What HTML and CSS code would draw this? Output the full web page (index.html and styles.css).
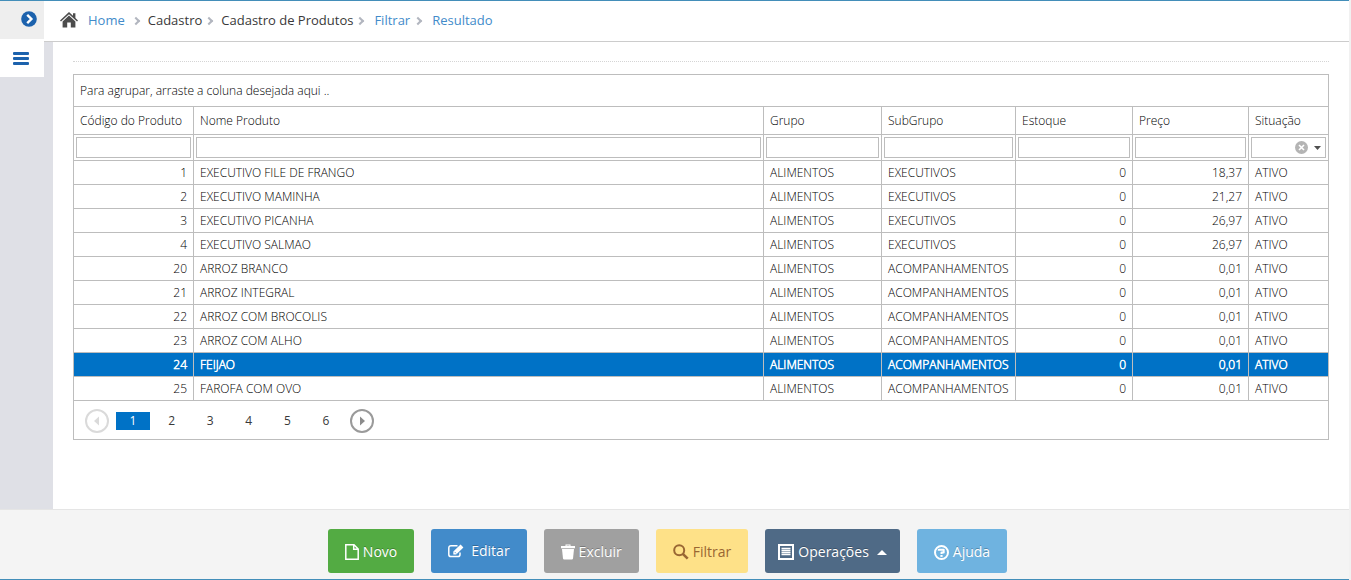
FILE: index.html
```html
<!DOCTYPE html>
<html lang="pt-BR">
<head>
  <meta charset="UTF-8">
  <title>Cadastro de Produtos</title>
  <link rel="stylesheet" href="styles.css">
</head>
<body>
  <div class="page">
    <div class="layout">

      <aside class="sidebar">
        <button class="side-btn side-toggle" aria-label="Expandir menu">
          <svg width="16" height="16" viewBox="0 0 16 16"><circle cx="8" cy="8" r="7.8" fill="#1c62ad"/><path d="M6.2 3.8 10.4 8l-4.2 4.2" fill="none" stroke="#fff" stroke-width="2.4"/></svg>
        </button>
        <button class="side-btn side-menu" aria-label="Menu">
          <svg width="16" height="14" viewBox="0 0 16 14" fill="#1c62ad"><rect y="0" width="16" height="3" rx="1"/><rect y="5" width="16" height="3" rx="1"/><rect y="10" width="16" height="3" rx="1"/></svg>
        </button>
      </aside>

      <div class="main">
        <nav class="topbar">
          <svg class="home-icon" width="18" height="16" viewBox="0 0 18 16" fill="#4c4c4c"><path d="M9 0 13 3.8V1.2h2.4V6L18 8.5l-1 1L9 2.2 1 9.5l-1-1z"/><path d="M9 3.6 15.4 9.400V15.500H10.800V10.500H7.200V15.500H2.600V9.400z"/></svg>
          <ul class="breadcrumb">
            <li><a href="#">Home</a></li>
            <li>Cadastro</li>
            <li>Cadastro de Produtos</li>
            <li><a href="#">Filtrar</a></li>
            <li><a href="#">Resultado</a></li>
          </ul>
        </nav>

        <div class="content">
          <hr class="divider">

          <div class="grid">
            <div class="group-panel">Para agrupar, arraste a coluna desejada aqui ..</div>
            <table class="grid-table">
              <colgroup>
                <col class="col-codigo">
                <col>
                <col class="col-grupo">
                <col class="col-subgrupo">
                <col class="col-estoque">
                <col class="col-preco">
                <col class="col-situacao">
              </colgroup>
              <thead>
                <tr>
                  <th>Código do Produto</th>
                  <th>Nome Produto</th>
                  <th>Grupo</th>
                  <th>SubGrupo</th>
                  <th>Estoque</th>
                  <th>Preço</th>
                  <th>Situação</th>
                </tr>
                <tr class="filter-row">
                  <td><input type="text" aria-label="Código do Produto"></td>
                  <td><input type="text" aria-label="Nome Produto"></td>
                  <td><input type="text" aria-label="Grupo"></td>
                  <td><input type="text" aria-label="SubGrupo"></td>
                  <td><input type="text" aria-label="Estoque"></td>
                  <td><input type="text" aria-label="Preço"></td>
                  <td>
                    <div class="combo">
                      <select aria-label="Situação"><option></option></select>
                      <button class="combo-clear" aria-label="Limpar">
                        <svg width="13" height="13" viewBox="0 0 13 13"><circle cx="6.500" cy="6.500" r="6.500" fill="#b4b4b4"/><path d="M4 4l5 5M9 4l-5 5" stroke="#fff" stroke-width="1.600"/></svg>
                      </button>
                      <svg class="combo-arrow" width="7" height="4" viewBox="0 0 7 4"><path d="M0 0h7L3.500 4z" fill="#4f4f4f"/></svg>
                    </div>
                  </td>
                </tr>
              </thead>
              <tbody>
                <tr><td class="num">1</td><td>EXECUTIVO FILE DE FRANGO</td><td>ALIMENTOS</td><td>EXECUTIVOS</td><td class="num">0</td><td class="num">18,37</td><td>ATIVO</td></tr>
                <tr><td class="num">2</td><td>EXECUTIVO MAMINHA</td><td>ALIMENTOS</td><td>EXECUTIVOS</td><td class="num">0</td><td class="num">21,27</td><td>ATIVO</td></tr>
                <tr><td class="num">3</td><td>EXECUTIVO PICANHA</td><td>ALIMENTOS</td><td>EXECUTIVOS</td><td class="num">0</td><td class="num">26,97</td><td>ATIVO</td></tr>
                <tr><td class="num">4</td><td>EXECUTIVO SALMAO</td><td>ALIMENTOS</td><td>EXECUTIVOS</td><td class="num">0</td><td class="num">26,97</td><td>ATIVO</td></tr>
                <tr><td class="num">20</td><td>ARROZ BRANCO</td><td>ALIMENTOS</td><td>ACOMPANHAMENTOS</td><td class="num">0</td><td class="num">0,01</td><td>ATIVO</td></tr>
                <tr><td class="num">21</td><td>ARROZ INTEGRAL</td><td>ALIMENTOS</td><td>ACOMPANHAMENTOS</td><td class="num">0</td><td class="num">0,01</td><td>ATIVO</td></tr>
                <tr><td class="num">22</td><td>ARROZ COM BROCOLIS</td><td>ALIMENTOS</td><td>ACOMPANHAMENTOS</td><td class="num">0</td><td class="num">0,01</td><td>ATIVO</td></tr>
                <tr><td class="num">23</td><td>ARROZ COM ALHO</td><td>ALIMENTOS</td><td>ACOMPANHAMENTOS</td><td class="num">0</td><td class="num">0,01</td><td>ATIVO</td></tr>
                <tr class="selected"><td class="num">24</td><td>FEIJAO</td><td>ALIMENTOS</td><td>ACOMPANHAMENTOS</td><td class="num">0</td><td class="num">0,01</td><td>ATIVO</td></tr>
                <tr><td class="num">25</td><td>FAROFA COM OVO</td><td>ALIMENTOS</td><td>ACOMPANHAMENTOS</td><td class="num">0</td><td class="num">0,01</td><td>ATIVO</td></tr>
              </tbody>
            </table>

            <div class="pager">
              <button class="pager-arrow" aria-label="Anterior" disabled>
                <svg width="24" height="24" viewBox="0 0 24 24"><circle cx="12" cy="12" r="11" fill="none" stroke="#dadada" stroke-width="2"/><path d="M14 7.500v9L9 12z" fill="#dadada"/></svg>
              </button>
              <div class="pager-pages">
                <button class="pager-page current">1</button>
                <button class="pager-page">2</button>
                <button class="pager-page">3</button>
                <button class="pager-page">4</button>
                <button class="pager-page">5</button>
                <button class="pager-page">6</button>
              </div>
              <button class="pager-arrow" aria-label="Próxima">
                <svg width="24" height="24" viewBox="0 0 24 24"><circle cx="12" cy="12" r="11" fill="none" stroke="#9a9a9a" stroke-width="2"/><path d="M10 7.500v9l5-4.500z" fill="#8c8c8c"/></svg>
              </button>
            </div>
          </div>
        </div>
      </div>
    </div>

    <footer class="actions">
      <button class="btn btn-novo">
        <svg width="14" height="16" viewBox="0 0 14 16"><path d="M.800.800H9L13.200 5v10.200H.800zM8.700.800V5.300h4.500" fill="none" stroke="#fff" stroke-width="1.500"/></svg>
        Novo
      </button>
      <button class="btn btn-editar">
        <svg width="16" height="14" viewBox="0 0 16 14"><path d="M9.500 1.700H3A2.200 2.200 0 0 0 .800 3.900v6.500A2.200 2.200 0 0 0 3 12.600h6.800a2.200 2.200 0 0 0 2.200-2.200V8.500" fill="none" stroke="#fff" stroke-width="1.500"/><path d="M12.600.600 15.400 3.400 8.200 10.400H5.300V7.600z" fill="#fff"/><path d="M6.600 7.900l1.500 1.500" stroke="#428bca" stroke-width=".8"/></svg>
        Editar
      </button>
      <button class="btn btn-excluir">
        <svg width="14" height="16" viewBox="0 0 14 16" fill="#fff"><path d="M4.500 2V.500h5V2H14v2.200H0V2zM5.500 2h3v-.600h-3z"/><path d="M1 5h12l-1 9.500q-.2 1-1.200 1H3.200q-1 0-1.200-1z"/></svg>
        Excluir
      </button>
      <button class="btn btn-filtrar">
        <svg width="16" height="16" viewBox="0 0 16 16" fill="none" stroke="#996633"><circle cx="6.200" cy="6.200" r="5" stroke-width="2"/><path d="M9.800 9.800l4.900 4.900" stroke-width="2.600"/></svg>
        Filtrar
      </button>
      <button class="btn btn-operacoes">
        <svg width="16" height="16" viewBox="0 0 16 16"><path d="M1 1h14v14H1z" fill="none" stroke="#fff" stroke-width="2"/><path d="M3.500 4.500h9M3.500 6.500h9M3.500 8.500h9M3.500 10.500h9" stroke="#fff" stroke-width="1.300"/></svg>
        Operações
        <svg class="caret" width="10" height="5" viewBox="0 0 10 5"><path d="M0 5l5-5 5 5z" fill="#fff"/></svg>
      </button>
      <button class="btn btn-ajuda">
        <svg width="15" height="15" viewBox="0 0 15 15" fill="none" stroke="#fff"><circle cx="7.500" cy="7.500" r="6.500" stroke-width="2"/><path d="M4.800 5.800V4.700h4.900v2.900H7.500v1.400" stroke-width="2" stroke-linejoin="round"/><path d="M7.500 10v1.900" stroke-width="2.200"/></svg>
        Ajuda
      </button>
    </footer>
  </div>
</body>
</html>
```
FILE: styles.css
```css
* {
  box-sizing: border-box;
}
body {
  margin: 0;
  padding-right: 2px;
  background: #f1f1f1;
  font-family: 'Open Sans', sans-serif;
  font-size: 13px;
  color: #393939;
}
button {
  padding: 0;
  border: none;
  background: none;
  font-family: inherit;
  cursor: pointer;
}
svg {
  display: block;
  flex: none;
}
a {
  color: #428bca;
  text-decoration: none;
}
.page {
  display: flex;
  flex-direction: column;
  min-height: 100vh;
  border-top: 1px solid #438eb9;
  border-bottom: 1px solid #438eb9;
  background: #fff;
}
.layout {
  display: flex;
  flex: 1;
}

/* sidebar */
.sidebar {
  width: 44px;
  background: #dfe0e6;
}
.side-btn {
  display: flex;
  align-items: center;
  width: 44px;
  height: 38px;
}
.side-toggle {
  justify-content: flex-end;
  padding: 0 7px 3px 0;
  background: #eee;
}
.side-menu {
  padding: 2px 0 0 13px;
  background: #fff;
}

.main {
  display: flex;
  flex-direction: column;
  flex: 1;
  min-width: 0;
}
.topbar {
  display: flex;
  align-items: center;
  height: 41px;
  padding: 0 16px 2px;
  border-bottom: 1px solid #ccc;
}
.home-icon {
  margin-right: 6px;
}
.breadcrumb {
  display: flex;
  margin: 0;
  padding: 0;
  list-style: none;
}
.breadcrumb li {
  display: flex;
  align-items: center;
  line-height: 20px;
}
.breadcrumb a {
  margin: 0 4px;
}
.breadcrumb li + li::before {
  content: "";
  box-sizing: border-box;
  width: 6px;
  height: 6px;
  margin: 2px 9px 0 4px;
  border: solid #b2b6bf;
  border-width: 2px 2px 0 0;
  transform: rotate(45deg);
}
.breadcrumb li + li a {
  margin: 0 1px 0 2px;
}
.content {
  flex: 1;
  padding: 19px 20px 20px;
  border-left: 9px solid #dfe0e6;
}
.divider {
  margin: 0 0 12px;
  border: none;
  border-top: 1px dotted #d5d5d5;
}

/* grid */
.grid {
  border: 1px solid #bdbdbd;
  font-size: 12px;
  font-weight: 300;
  color: #000;
}
.group-panel {
  padding: 0 6px;
  border-bottom: 1px solid #bdbdbd;
  line-height: 31px;
}
.grid-table {
  width: 100%;
  table-layout: fixed;
  border-collapse: separate;
  border-spacing: 0;
}
.col-codigo { width: 120px; }
.col-grupo { width: 118px; }
.col-subgrupo { width: 134px; }
.col-estoque { width: 117px; }
.col-preco { width: 116px; }
.col-situacao { width: 79px; }
.grid-table th,
.grid-table td {
  height: 24px;
  padding: 0 6px;
  border-right: 1px solid #bdbdbd;
  border-bottom: 1px solid #bdbdbd;
  font-weight: 300;
  text-align: left;
  white-space: nowrap;
}
.grid-table th {
  height: 28px;
}
.grid-table th:last-child,
.grid-table td:last-child {
  border-right: none;
}
.grid-table td.num {
  text-align: right;
}
.grid-table .filter-row td {
  height: 26px;
  padding: 2px;
}
.filter-row input,
.filter-row select {
  display: block;
  width: 100%;
  height: 21px;
  padding: 0 4px;
  border: 1px solid #bdbdbd;
  border-radius: 0;
  background: #fff;
  font: inherit;
  appearance: none;
}
.combo {
  position: relative;
}
.combo-clear {
  position: absolute;
  top: 4px;
  right: 18px;
}
.combo-arrow {
  position: absolute;
  top: 9px;
  right: 5px;
  pointer-events: none;
}
.selected td {
  background: #0072c6;
  color: #fff;
  -webkit-text-stroke: 0.5px #fff;
}

/* pager */
.pager {
  display: flex;
  align-items: center;
  gap: 7px;
  height: 38px;
  padding: 2px 11px 0;
}
.pager-pages {
  display: flex;
  justify-content: space-between;
  width: 227px;
}
.pager-page {
  width: 34px;
  height: 18px;
  font-size: 12px;
  line-height: 18px;
  color: #393939;
}
.pager-page.current {
  background: #0072c6;
  color: #fff;
}

/* action buttons */
.actions {
  display: flex;
  justify-content: center;
  gap: 17px;
  height: 70px;
  padding: 19px 14px 0 0;
  border-top: 1px solid #e5e5e5;
  background: #f4f4f4;
}
.btn {
  display: flex;
  align-items: center;
  gap: 4px;
  height: 44px;
  padding: 2px 17px 0;
  border-radius: 3px;
  font-size: 14px;
  line-height: 20px;
  color: #fff;
  text-shadow: 0 -1px 0 rgba(0, 0, 0, 0.25);
}
.btn-novo { background: #53ab43; }
.btn-editar { gap: 7px; padding-top: 0; background: #428bca; }
.btn-excluir { background: #a0a0a0; }
.btn-filtrar { background: #fee188; color: #996633; text-shadow: none; }
.btn-operacoes { padding: 2px 13px 0; background: #4f6a86; }
.btn-ajuda { background: #6fb3e0; }
.caret {
  margin-left: 4px;
}
```
